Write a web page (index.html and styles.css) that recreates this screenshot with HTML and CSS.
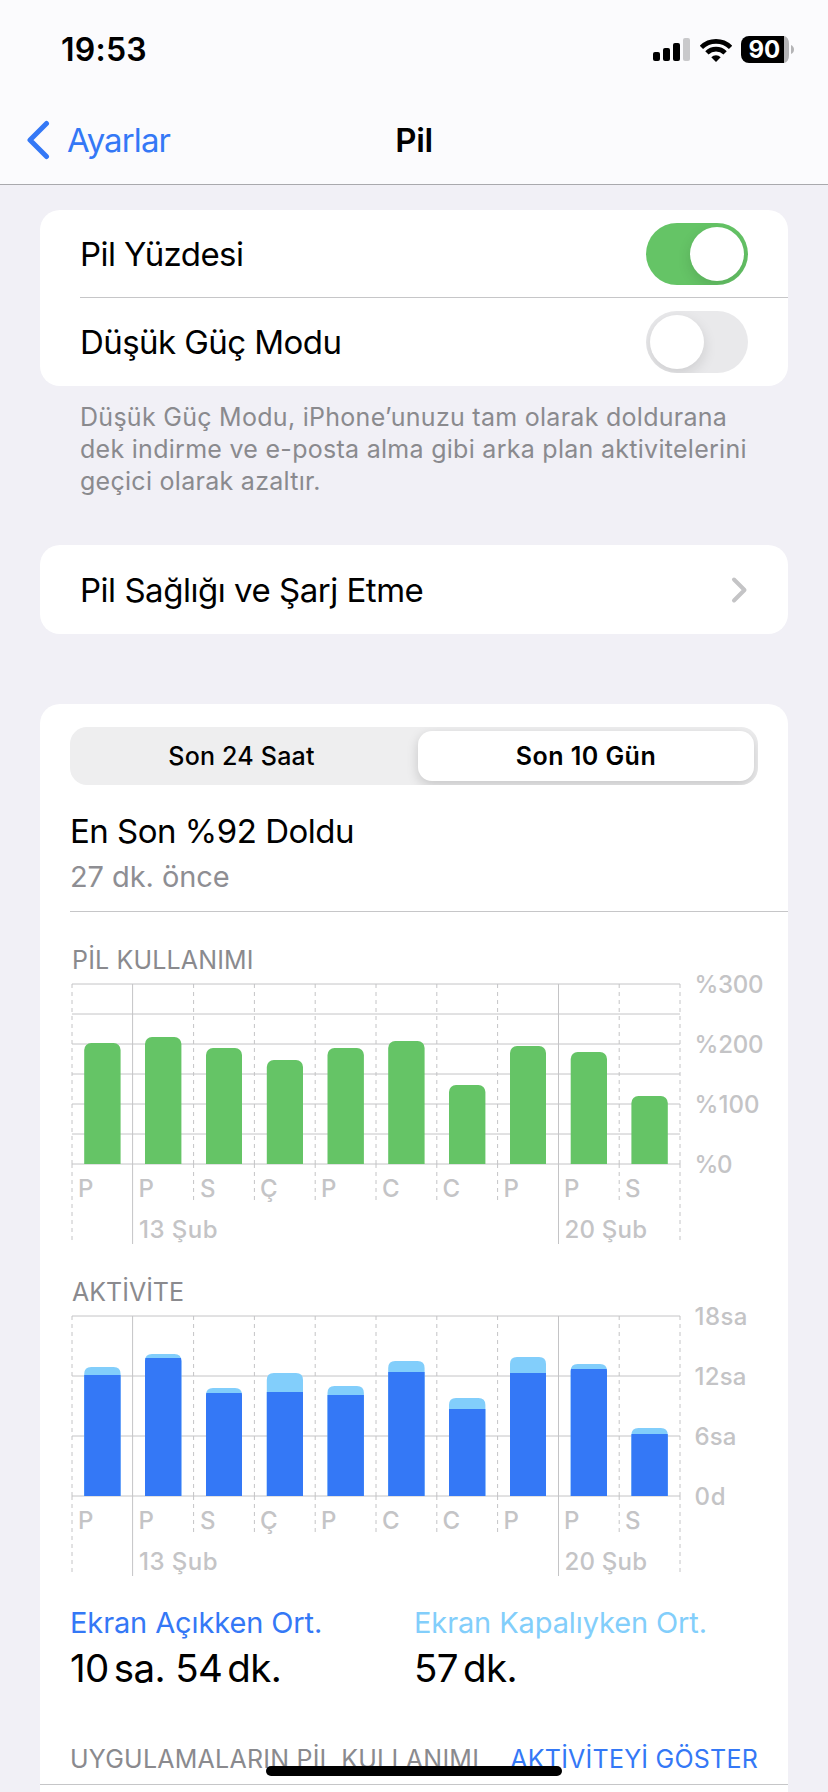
FILE: index.html
```html
<!DOCTYPE html>
<html lang="tr">
<head>
<meta charset="utf-8">
<title>Pil</title>
<link rel="stylesheet" href="styles.css">
</head>
<body>
<header class="header">
  <div class="status">
    <span class="clock">19:53</span>
    <div class="status-icons">
      <svg class="signal" width="37" height="23" viewBox="0 0 37 23">
        <rect x="0" y="14" width="7" height="9" rx="2"/>
        <rect x="10" y="10" width="7" height="13" rx="2"/>
        <rect x="20" y="5" width="7" height="18" rx="2"/>
        <rect class="dim" x="30" y="0" width="7" height="23" rx="2"/>
      </svg>
      <svg class="wifi" width="32" height="24" viewBox="0 0 32 24">
        <path class="arc" d="M1.4 9.4A20.7 20.7 0 0 1 30.6 9.4M6.9 14.9A12.9 12.9 0 0 1 25.1 14.9"/>
        <path d="M16 24L11.3 19.3A6.7 6.7 0 0 1 20.7 19.3Z"/>
      </svg>
      <svg class="battery" width="53" height="27" viewBox="0 0 53 27">
        <path d="M8 0H43V27H8A8 8 0 0 1 0 19V8A8 8 0 0 1 8 0Z"/>
        <path class="rest" d="M43 0A5.5 7.500 0 0 1 48 8V19A5.500 7.500 0 0 1 43 27Z"/>
        <path class="rest" d="M50 9Q53 10.500 53 13.500Q53 16.500 50 18Z"/>
        <text class="level" x="23.300" y="22" text-anchor="middle">90</text>
      </svg>
    </div>
  </div>
  <nav class="nav">
    <a class="back">
      <svg width="28" height="40" viewBox="0 0 28 40"><path d="M22.500 3.500L6 20L22.500 36.500"/></svg>
      <span>Ayarlar</span>
    </a>
    <h1 class="title">Pil</h1>
  </nav>
</header>

<main class="content">
  <section class="card">
    <div class="row"><span class="pct">Pil Yüzdesi</span><span class="toggle on"><i class="knob"></i></span></div>
    <div class="row divided"><span class="low">Düşük Güç Modu</span><span class="toggle"><i class="knob"></i></span></div>
  </section>
  <p class="note">Düşük Güç Modu, iPhone’unuzu tam olarak doldurana<br>dek indirme ve e-posta alma gibi arka plan aktivitelerini<br>geçici olarak azaltır.</p>

  <section class="card health">
    <div class="row"><span>Pil Sağlığı ve Şarj Etme</span>
      <svg class="chevron" width="18" height="28" viewBox="0 0 18 28"><path d="M4 3.500L14.500 14L4 24.500"/></svg>
    </div>
  </section>

  <section class="card usage">
    <div class="segments">
      <span class="segment">Son 24 Saat</span>
      <span class="segment selected">Son 10 Gün</span>
    </div>
    <div class="charge">
      <div class="charge-level">En Son %92 Doldu</div>
      <div class="charge-time">27 dk. önce</div>
    </div>

    <h2 class="chart-title">PİL KULLANIMI</h2>
    <svg class="chart" width="718" height="270" viewBox="0 0 718 270">
      <defs><clipPath id="plot"><rect x="0" y="0" width="718" height="189"/></clipPath></defs>
      <path class="grid" d="M2 9H610M2 39H610M2 69H610M2 99H610M2 129H610M2 159H610M2 189H610"/>
      <path class="grid" d="M62.600 9V269M488.500 9V269"/>
      <path class="grid dashed" d="M2 9V189M610 9V189M123.600 9V189M184.400 9V189M245.200 9V189M306 9V189M366.800 9V189M427.600 9V189M549.200 9V189"/>
      <path class="grid dashed" d="M2 189V265M610 189V265M123.600 189V225M184.400 189V225M245.200 189V225M306 189V225M366.800 189V225M427.600 189V225M549.200 189V225"/>
      <g class="bars green" clip-path="url(#plot)">
        <rect x="14.200" y="68" width="36.400" height="140" rx="7"/>
        <rect x="75" y="62" width="36.400" height="140" rx="7"/>
        <rect x="136" y="73" width="36" height="140" rx="7"/>
        <rect x="196.800" y="85" width="36.200" height="140" rx="7"/>
        <rect x="257.500" y="73" width="36.400" height="140" rx="7"/>
        <rect x="318.200" y="66" width="36.400" height="140" rx="7"/>
        <rect x="379" y="110" width="36.400" height="140" rx="7"/>
        <rect x="440" y="71" width="36" height="140" rx="7"/>
        <rect x="500.700" y="77" width="36.300" height="140" rx="7"/>
        <rect x="561.400" y="121" width="36.400" height="140" rx="7"/>
      </g>
      <g class="labels">
        <text x="8" y="222">P</text><text x="68.500" y="222">P</text><text x="130" y="222">S</text><text x="190" y="222">Ç</text><text x="251" y="222">P</text>
        <text x="312" y="222">C</text><text x="372.500" y="222">C</text><text x="433.500" y="222">P</text><text x="494" y="222">P</text><text x="555" y="222">S</text>
        <text x="69" y="263" textLength="78.500">13 Şub</text><text x="494.500" y="263" textLength="82.500">20 Şub</text>
        <text x="624.500" y="18" textLength="69">%300</text><text x="624.500" y="78" textLength="69">%200</text><text x="624.500" y="138" textLength="65">%100</text><text x="624.500" y="198" textLength="38">%0</text>
      </g>
    </svg>

    <h2 class="chart-title activity-title">AKTİVİTE</h2>
    <svg class="chart" width="718" height="270" viewBox="0 0 718 270">
      <path class="grid" d="M2 9H610M2 69H610M2 129H610M2 189H610"/>
      <path class="grid" d="M62.600 9V269M488.500 9V269"/>
      <path class="grid dashed" d="M2 9V189M610 9V189M123.600 9V189M184.400 9V189M245.200 9V189M306 9V189M366.800 9V189M427.600 9V189M549.200 9V189"/>
      <path class="grid dashed" d="M2 189V265M610 189V265M123.600 189V225M184.400 189V225M245.200 189V225M306 189V225M366.800 189V225M427.600 189V225M549.200 189V225"/>
      <defs>
        <clipPath id="totals">
          <path d="M14.200 189V67q0-7 7-7h22.400q7 0 7 7V189ZM75 189V54q0-7 7-7h22.400q7 0 7 7V189ZM136 189V88q0-7 7-7h22q7 0 7 7V189ZM196.800 189V73q0-7 7-7h22.200q7 0 7 7V189ZM257.500 189V86q0-7 7-7h22.400q7 0 7 7V189ZM318.200 189V61q0-7 7-7h22.400q7 0 7 7V189ZM379 189V98q0-7 7-7h22.400q7 0 7 7V189ZM440 189V57q0-7 7-7h22q7 0 7 7V189ZM500.700 189V64q0-7 7-7h22.300q7 0 7 7V189ZM561.400 189V128q0-7 7-7h22.400q7 0 7 7V189Z"/>
        </clipPath>
      </defs>
      <g clip-path="url(#totals)">
        <rect class="screen-off" x="0" y="0" width="610" height="189"/>
        <path class="screen-on" d="M14 68H51V189H14ZM74 51H112V189H74ZM135 86H173V189H135ZM196 85H234V189H196ZM257 88H294V189H257ZM318 65H355V189H318ZM378 102H416V189H378ZM439 66H477V189H439ZM500 62H538V189H500ZM561 127H598V189H561Z"/>
      </g>
      <g class="labels">
        <text x="8" y="222">P</text><text x="68.500" y="222">P</text><text x="130" y="222">S</text><text x="190" y="222">Ç</text><text x="251" y="222">P</text>
        <text x="312" y="222">C</text><text x="372.500" y="222">C</text><text x="433.500" y="222">P</text><text x="494" y="222">P</text><text x="555" y="222">S</text>
        <text x="69" y="263" textLength="78.500">13 Şub</text><text x="494.500" y="263" textLength="82.500">20 Şub</text>
        <text x="624.500" y="18" textLength="53">18sa</text><text x="624.500" y="78" textLength="52">12sa</text><text x="624.500" y="138" textLength="42">6sa</text><text x="624.500" y="198" textLength="31">0d</text>
      </g>
    </svg>

    <div class="averages">
      <div>
        <div class="avg-label on-label">Ekran Açıkken Ort.</div>
        <div class="avg-value">10<span class="unit">sa.</span> 54<span class="unit">dk.</span></div>
      </div>
      <div>
        <div class="avg-label off-label">Ekran Kapalıyken Ort.</div>
        <div class="avg-value">57<span class="unit">dk.</span></div>
      </div>
    </div>
    <div class="apps-header">
      <span class="apps-title">UYGULAMALARIN PİL KULLANIMI</span>
      <a class="apps-action">AKTİVİTEYİ GÖSTER</a>
    </div>
  </section>
</main>
<div class="home-indicator"></div>
</body>
</html>
```
FILE: styles.css
```css
* { box-sizing: border-box; }
body {
  margin: 0;
  width: 828px;
  height: 1792px;
  overflow: hidden;
  display: flex;
  flex-direction: column;
  background: #f1f0f6;
  color: #000;
  font-family: Inter, "Liberation Sans", sans-serif;
  font-size: 33px;
  white-space: nowrap;
}
svg { display: block; flex: none; }

.header { height: 185px; flex: none; background: #fbfbfd; border-bottom: 1px solid #a9a9ad; }
.status { height: 96px; padding: 3px 34px 0 61px; display: flex; justify-content: space-between; align-items: center; }
.clock { font-size: 32px; font-weight: 600; letter-spacing: 0.25px; }
.status-icons { display: flex; align-items: center; gap: 9.5px; }
.dim { fill: #c9c9cb; }
.arc { fill: none; stroke: #000; stroke-width: 4.7; }
.rest { fill: #b4b4b6; }
.level { font-size: 24px; font-weight: 700; fill: #fff; }
.nav { height: 88px; padding: 0 24px; display: grid; grid-template-columns: 1fr auto 1fr; align-items: center; }
.back { display: flex; align-items: center; gap: 15px; color: #3478f6; letter-spacing: -0.9px; }
.back path { fill: none; stroke: #3478f6; stroke-width: 5; stroke-linecap: round; stroke-linejoin: round; }
.title { margin: 0; font-size: 33px; font-weight: 600; letter-spacing: -0.4px; }

.content { flex: 1; min-height: 0; padding: 25px 40px 0; display: flex; flex-direction: column; }
.card { flex: none; background: #fff; border-radius: 20px; }
.row { height: 88px; margin-left: 40px; padding-right: 40px; display: flex; align-items: center; justify-content: space-between; letter-spacing: -0.56px; }
.divided { box-shadow: 0 -1px #c6c6c8; }
.toggle { width: 102px; height: 62px; border-radius: 31px; background: #e9e9eb; padding: 4px; display: flex; overflow: hidden; }
.toggle.on { background: #65c466; justify-content: flex-end; }
.knob { width: 54px; height: 54px; border-radius: 50%; background: #fff; box-shadow: 0 5px 14px rgba(0, 0, 0, .12); }
.note { margin: 15px 0 0 40px; font-size: 25px; line-height: 32px; letter-spacing: 0.28px; color: #8a8a8e; }
.health { margin-top: 48px; }
.health .row { height: 89px; letter-spacing: -0.48px; }
.chevron path { fill: none; stroke: #c4c4c6; stroke-width: 4; stroke-linecap: round; stroke-linejoin: round; }

.usage { margin-top: 70px; height: 1120px; padding: 23px 0 0 30px; }
.segments { width: 688px; height: 58px; padding: 4px; border-radius: 17px; background: #eeeeef; display: grid; grid-template-columns: 344px 336px; overflow: hidden; }
.segments .selected { margin-left: 0; }
.segment { display: flex; align-items: center; justify-content: center; font-size: 25px; font-weight: 500; letter-spacing: 0.2px; }
.segment:first-child { padding-right: 9px; }
.selected { background: #fff; border-radius: 14px; font-weight: 600; letter-spacing: 0.45px; box-shadow: 0 4px 12px rgba(0, 0, 0, .17); }
.charge { margin-top: 26px; height: 101px; border-bottom: 1px solid #c6c6c8; }
.charge-level { line-height: 40px; letter-spacing: -0.5px; }
.charge-time { margin-top: 8px; font-size: 29px; line-height: 36px; letter-spacing: -0.08px; color: #8e8e93; }
.chart-title { margin: 33px 0 0 2px; font-size: 25px; font-weight: 400; line-height: 30px; letter-spacing: 0.16px; color: #8a8a8e; }
.activity-title { margin-top: 32px; letter-spacing: 0; }
.chart { overflow: visible; }
.grid { fill: none; stroke: #c4c4c6; stroke-width: 1; }
.dashed { stroke-dasharray: 4 4; }
.green { fill: #65c466; }
.screen-off { fill: #82cefb; }
.screen-on { fill: #3478f6; }
.labels { font-size: 24px; font-weight: 500; fill: #c4c4c6; }

.averages { margin-top: 28px; display: grid; grid-template-columns: 344px 344px; }
.avg-label { font-size: 29px; line-height: 36px; letter-spacing: -0.11px; }
.on-label { color: #3478f6; }
.off-label { color: #82cefb; }
.avg-value { margin-top: 5px; font-size: 38.500px; line-height: 44px; letter-spacing: -0.6px; }
.unit { margin-left: 5px; }
.apps-header { margin: 54px 0 0 -30px; height: 41px; padding: 0 30px; border-bottom: 1px solid #c6c6c8; display: flex; justify-content: space-between; font-size: 25px; line-height: 30px; letter-spacing: 0.23px; color: #8a8a8e; }
.apps-action { color: #3478f6; }
.home-indicator { position: absolute; left: 266px; top: 1766px; width: 296px; height: 10px; border-radius: 5px; background: #000; }
```
